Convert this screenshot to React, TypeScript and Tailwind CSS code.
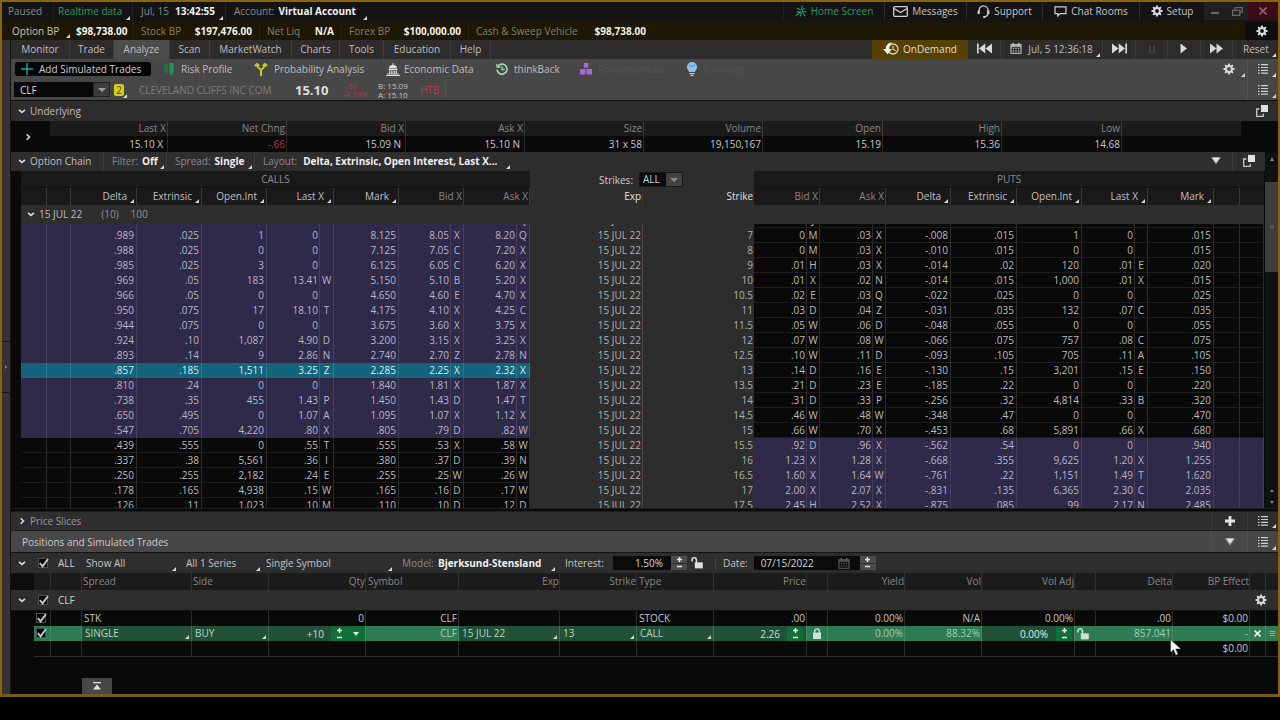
import React, { useLayoutEffect, useRef } from "react";

const CALLS_AND_PUTS: string[][] = [
  [".990", ".025", "0", "0", "", "9.125", "9.05", "X", "9.20", "Q", "6", "0", "J", ".03", "X", "-.006", ".015", "0", "0", "", ".015"],
  [".989", ".025", "1", "0", "", "8.125", "8.05", "X", "8.20", "Q", "7", "0", "M", ".03", "X", "-.008", ".015", "1", "0", "", ".015"],
  [".988", ".025", "0", "0", "", "7.125", "7.05", "C", "7.20", "X", "8", "0", "M", ".03", "X", "-.010", ".015", "0", "0", "", ".015"],
  [".985", ".025", "3", "0", "", "6.125", "6.05", "C", "6.20", "X", "9", ".01", "H", ".03", "X", "-.014", ".02", "120", ".01", "E", ".020"],
  [".969", ".05", "183", "13.41", "W", "5.150", "5.10", "B", "5.20", "X", "10", ".01", "X", ".02", "N", "-.014", ".015", "1,000", ".01", "X", ".015"],
  [".966", ".05", "0", "0", "", "4.650", "4.60", "E", "4.70", "X", "10.5", ".02", "E", ".03", "Q", "-.022", ".025", "0", "0", "", ".025"],
  [".950", ".075", "17", "18.10", "T", "4.175", "4.10", "X", "4.25", "C", "11", ".03", "D", ".04", "Z", "-.031", ".035", "132", ".07", "C", ".035"],
  [".944", ".075", "0", "0", "", "3.675", "3.60", "X", "3.75", "X", "11.5", ".05", "W", ".06", "D", "-.048", ".055", "0", "0", "", ".055"],
  [".924", ".10", "1,087", "4.90", "D", "3.200", "3.15", "X", "3.25", "X", "12", ".07", "W", ".08", "W", "-.066", ".075", "757", ".08", "C", ".075"],
  [".893", ".14", "9", "2.86", "N", "2.740", "2.70", "Z", "2.78", "N", "12.5", ".10", "W", ".11", "D", "-.093", ".105", "705", ".11", "A", ".105"],
  [".857", ".185", "1,511", "3.25", "Z", "2.285", "2.25", "X", "2.32", "X", "13", ".14", "D", ".16", "E", "-.130", ".15", "3,201", ".15", "E", ".150"],
  [".810", ".24", "0", "0", "", "1.840", "1.81", "X", "1.87", "X", "13.5", ".21", "D", ".23", "E", "-.185", ".22", "0", "0", "", ".220"],
  [".738", ".35", "455", "1.43", "P", "1.450", "1.43", "D", "1.47", "T", "14", ".31", "D", ".33", "P", "-.256", ".32", "4,814", ".33", "B", ".320"],
  [".650", ".495", "0", "1.07", "A", "1.095", "1.07", "X", "1.12", "X", "14.5", ".46", "W", ".48", "W", "-.348", ".47", "0", "0", "", ".470"],
  [".547", ".705", "4,220", ".80", "X", ".805", ".79", "D", ".82", "W", "15", ".66", "W", ".70", "X", "-.453", ".68", "5,891", ".66", "X", ".680"],
  [".439", ".555", "0", ".55", "T", ".555", ".53", "X", ".58", "W", "15.5", ".92", "D", ".96", "X", "-.562", ".54", "0", "0", "", ".940"],
  [".337", ".38", "5,561", ".36", "I", ".380", ".37", "D", ".39", "N", "16", "1.23", "X", "1.28", "X", "-.668", ".355", "9,625", "1.20", "X", "1.255"],
  [".250", ".255", "2,182", ".24", "E", ".255", ".25", "W", ".26", "W", "16.5", "1.60", "X", "1.64", "W", "-.761", ".22", "1,151", "1.49", "T", "1.620"],
  [".178", ".165", "4,938", ".15", "W", ".165", ".16", "D", ".17", "W", "17", "2.00", "X", "2.07", "X", "-.831", ".135", "6,365", "2.30", "C", "2.035"],
  [".126", ".11", "1,023", ".10", "M", ".110", ".10", "D", ".12", "D", "17.5", "2.45", "H", "2.52", "X", "-.875", ".085", "99", "2.17", "N", "2.485"],
];

const UNDERLYING = [
  ["Last X", "15.10 X"],
  ["Net Chng", "-.66"],
  ["Bid X", "15.09 N"],
  ["Ask X", "15.10 N"],
  ["Size", "31 x 58"],
  ["Volume", "19,150,167"],
  ["Open", "15.19"],
  ["High", "15.36"],
  ["Low", "14.68"],
];

/* ---------- small drawings ---------- */

function Corner() {
  return (
    <svg className="pointer-events-none absolute right-0.5 bottom-0.5 size-1" viewBox="0 0 4 4" aria-hidden="true">
      <path d="M4 0v4H0z" fill="#d6d6d6" />
    </svg>
  );
}

function Gear({ className = "size-3" }: { className?: string }) {
  return (
    <svg className={className} viewBox="0 0 24 24" fill="none" stroke="currentColor" aria-hidden="true">
      <circle cx="12" cy="12" r="5.8" strokeWidth="4" />
      <path
        strokeWidth="3.8"
        d="M12 1v4M12 19v4M1 12h4M19 12h4M4.2 4.2l3 3M16.8 16.8l3 3M4.2 19.8l3-3M16.8 7.2l3-3"
      />
    </svg>
  );
}

function ListIcon() {
  return (
    <svg className="h-2.5 w-3" viewBox="0 0 12 10" fill="#cfcfcf" aria-hidden="true">
      <path d="M1 0h1.6v1.3H1zM4 0h7v1.3H4zM1 2.9h1.600v1.2H1zM4 2.9h7v1.2H4zM1 5.7h1.6v1.2H1zM4 5.7h7v1.2H4zM1 8.500h1.6v1.2H1zM4 8.5h7v1.2H4z" />
    </svg>
  );
}

function Chevron({ right = false }: { right?: boolean }) {
  return (
    <svg className="size-2" viewBox="0 0 8 8" fill="none" stroke="#d8d8d8" strokeWidth="1.6" aria-hidden="true">
      <path d={right ? "M2.7 1.2l2.8 2.8-2.8 2.8" : "M1 2.8L4 5.4l3-2.6"} />
    </svg>
  );
}

function Popout() {
  return (
    <svg className="size-3" viewBox="0 0 12 12" aria-hidden="true">
      <path d="M3.5 4H.7v7.3h6.6V8.8" fill="none" stroke="#c8c8c8" strokeWidth="1.3" />
      <rect x="5" y="0" width="7" height="7" fill="#e2e2e2" />
    </svg>
  );
}

function DownTriangle() {
  return (
    <svg className="h-2 w-2.5" viewBox="0 0 10 8" aria-hidden="true">
      <path d="M0 .5h10L5 7.5z" fill="#9a9a9a" />
      <path d="M1.2 .5h7.600L5 5.4z" fill="#e4e4e4" />
    </svg>
  );
}

function OpenLock({ fill = "#dedede" }: { fill?: string }) {
  return (
    <svg className="h-3 w-3" viewBox="0 0 12 12" aria-hidden="true">
      <path d="M1 4.5V3a2.2 2.2 0 0 1 4.4 0v3" stroke={fill} strokeWidth="1.5" fill="none" />
      <rect x="3.8" y="5.4" width="8" height="6" fill={fill} />
    </svg>
  );
}

function CalendarIcon({ className = "text-[#c4c4c4]" }: { className?: string }) {
  return (
    <svg className={`h-[11px] w-3 ${className}`} viewBox="0 0 12 11" aria-hidden="true">
      <rect x="1" y="1.7" width="10" height="8.6" fill="none" stroke="currentColor" strokeWidth="1.1" />
      <path d="M1 3h10M3.3 0v2.5M8.7 0v2.5" stroke="currentColor" strokeWidth="1.5" />
      <path d="M2.8 5.4h1.4M5.3 5.4h1.4M7.8 5.4h1.4M2.8 7.9h1.4M5.3 7.9h1.4M7.8 7.9h1.4" stroke="currentColor" strokeWidth="1.3" />
    </svg>
  );
}

function Stepper({ green = false, name }: { green?: boolean; name: string }) {
  return (
    <span className={`flex h-[14px] w-4 flex-col ${green ? "bg-[#0f7038]" : "gap-px"}`}>
      <button aria-label={`Increase ${name}`} className={`flex flex-1 items-center justify-center ${green ? "" : "bg-[#4c4c4c]"}`}>
        <svg className="size-[5px]" viewBox="0 0 5 5" stroke="#e8e8e8" strokeWidth="1.5" aria-hidden="true">
          <path d="M0 2.5h5M2.5 0v5" />
        </svg>
      </button>
      <button aria-label={`Decrease ${name}`} className={`flex flex-1 items-center justify-center ${green ? "" : "bg-[#4c4c4c]"}`}>
        <svg className="size-[5px]" viewBox="0 0 5 5" stroke="#e8e8e8" strokeWidth="1.5" aria-hidden="true">
          <path d="M0 2.5h5" />
        </svg>
      </button>
    </span>
  );
}

function Check({ label, text }: { label: string; text?: string }) {
  return (
    <label className="flex items-center gap-[9px] text-[#cfcfcf]">
      <span className="relative block size-[11px]">
        <input
          type="checkbox"
          defaultChecked
          aria-label={label}
          className="block size-[10px] appearance-none border border-[#4e4e4e] bg-[#050505]"
        />
        <svg className="pointer-events-none absolute inset-0 size-[11px]" viewBox="0 0 11 11" aria-hidden="true">
          <path d="M1.8 5.2l2.8 3.2L10 1" fill="none" stroke="#c6c6c6" strokeWidth="1.9" />
        </svg>
      </span>
      {text}
    </label>
  );
}

/* ---------- header bars ---------- */

function StatusBar() {
  return (
    <header className="flex h-5 items-stretch bg-[#141414] text-[#c6c6c6] *:pb-0.5">
      <span className="flex w-[52px] items-center border-r border-[#1f1f1f] pl-1.5 text-[#8a8a8a]">Paused</span>
      <button className="relative flex w-[79px] items-center border-r border-[#242424] pl-1 text-[#2c9a62]">
        Realtime data
        <Corner />
      </button>
      <button className="relative flex w-[93px] items-center gap-1.5 border-r border-[#242424] pl-2 text-[#8a8a8a]">
        Jul, 15 <b className="text-[#f2f2f2]">13:42:55</b>
        <Corner />
      </button>
      <button className="relative flex w-[143px] items-center gap-1 pl-2 text-[#8a8a8a]">
        Account: <b className="text-[#f2f2f2]">Virtual Account</b>
        <Corner />
      </button>
      <nav className="ml-auto flex">
        <button className="flex w-[101px] items-center justify-center gap-1 border-l border-[#202020] text-[#2c9a62]">
          <svg className="size-3" viewBox="0 0 12 12" fill="none" stroke="#2a8a59" strokeWidth="1.3" aria-hidden="true">
            <path d="M7.2.5L6.6 5M9.8 3.2L6.8 5.6M11.3 6.6L7 6.4M1.8 3.2L5.8 5M6 6.4L1 10.8M6.6 7L5.2 11.5M7.4 7l2.8 4.2M4.6 6.6L1.8 7" />
          </svg>
          Home Screen
        </button>
        <button className="flex w-[82px] items-center justify-center gap-1 border-l border-[#2c2c2c]">
          <svg className="h-[11px] w-[15px]" viewBox="0 0 15 11" fill="none" stroke="#cfcfcf" strokeWidth="1.3" aria-hidden="true">
            <rect x=".7" y=".7" width="13.6" height="9.6" rx=".8" />
            <path d="M1 2.5l6.5 4 6.5-4" />
          </svg>
          Messages
        </button>
        <button className="flex w-[76px] items-center justify-center gap-1 border-l border-[#2c2c2c]">
          <svg className="size-[13px]" viewBox="0 0 13 13" fill="none" stroke="#cfcfcf" strokeWidth="1.3" aria-hidden="true">
            <path d="M2 7.5V5.4a4.4 4.4 0 0 1 9 0v2.1c0 2.5-1.4 4-3.4 4.4" />
            <path d="M1.7 5.5v3.4M11.3 5.5v3.4M6.2 12h2" strokeWidth="2.2" />
          </svg>
          Support
        </button>
        <button className="flex w-[97px] items-center justify-center gap-1 border-l border-[#2c2c2c]">
          <svg className="h-[11px] w-[13px]" viewBox="0 0 13 11" fill="none" stroke="#cfcfcf" strokeWidth="1.2" aria-hidden="true">
            <path d="M1 .8h11v6.8H6.2L3.8 10V7.6H1z" />
          </svg>
          Chat Rooms
        </button>
        <button className="flex w-[65px] items-center justify-center gap-1 border-l border-[#2c2c2c]">
          <Gear className="size-3 text-[#dcdcdc]" />
          Setup
        </button>
        <button aria-label="Minimize" className="flex w-[22px] items-center justify-center bg-[#202020]">
          <svg className="size-2" viewBox="0 0 8 8" stroke="#7a7a7a" strokeWidth="1.6" aria-hidden="true">
            <path d="M0 6h8" />
          </svg>
        </button>
        <button aria-label="Restore" className="flex w-[22px] items-center justify-center bg-[#202020]">
          <svg className="h-[9px] w-[11px]" viewBox="0 0 11 9" fill="none" stroke="#686868" strokeWidth="1.3" aria-hidden="true">
            <path d="M3 3V.7h7.3v4.6H8M.7 3.4h7.1v4.9H.7z" />
          </svg>
        </button>
        <button aria-label="Close" className="flex w-[30px] items-center justify-center bg-[#3b0c17]">
          <svg className="size-2" viewBox="0 0 8 8" stroke="#8d6670" strokeWidth="1.6" aria-hidden="true">
            <path d="M.5.5l7 7M7.5.5l-7 7" />
          </svg>
        </button>
      </nav>
    </header>
  );
}

function BalanceBar() {
  return (
    <div className="flex h-[18px] items-stretch bg-[#1e1704] text-[#85806f]">
      <div className="flex w-[132px] items-center border-r border-[#2a2415] pl-2.5 text-[#c9c4b2]">
        <button className="relative flex h-full w-[60px] items-center">
          Option BP
          <Corner />
        </button>
        <b className="pl-1 text-[#f2f2ec]">$98,738.00</b>
      </div>
      <div className="flex w-[126px] items-center justify-between border-r border-[#2a2415] px-[7px]">
        Stock BP <b className="text-[#f2f2ec]">$197,476.00</b>
      </div>
      <div className="flex w-[82px] items-center justify-between border-r border-[#2a2415] px-[7px]">
        Net Liq <b className="text-[#f2f2ec]">N/A</b>
      </div>
      <div className="flex w-[127px] items-center justify-between border-r border-[#2a2415] px-[7px]">
        Forex BP <b className="text-[#f2f2ec]">$100,000.00</b>
      </div>
      <div className="flex w-[184px] items-center justify-between px-[7px]">
        Cash &amp; Sweep Vehicle <b className="text-[#f2f2ec]">$98,738.00</b>
      </div>
      <button aria-label="Balance settings" className="ml-auto flex w-[33px] items-center justify-center bg-[#0d0d0d] text-[#e0e0e0]">
        <Gear />
      </button>
    </div>
  );
}

const TAB = "flex items-center justify-center border-r border-[#3e3e3e] pb-0.5";
const PLAY = "flex items-center justify-center border-r border-[#3a3a3a] pb-0.5";

function MenuBar() {
  return (
    <nav className="flex h-[19px] items-stretch bg-[#2d2b2c] text-[#bebebe]">
      <button className={`${TAB} w-[59px]`}>Monitor</button>
      <button className={`${TAB} w-11`}>Trade</button>
      <button className={`${TAB} w-14 bg-[#4c4c4c]`}>Analyze</button>
      <button className={`${TAB} w-10`}>Scan</button>
      <button className={`${TAB} w-[82px]`}>MarketWatch</button>
      <button className={`${TAB} w-12`}>Charts</button>
      <button className={`${TAB} w-11`}>Tools</button>
      <button className={`${TAB} w-[67px]`}>Education</button>
      <button className={`${TAB} w-10`}>Help</button>
      <div className="ml-auto flex">
        <button className="flex w-24 items-center justify-center gap-1 bg-[#574005] pb-0.5 text-[#e0dccb]">
          <svg className="h-[13px] w-4" viewBox="0 0 16 13" aria-hidden="true">
            <circle cx="10" cy="7" r="5" fill="none" stroke="#d9d4bf" strokeWidth="1.3" />
            <path d="M10 4v3.2l2.6 1.6" fill="none" stroke="#d9d4bf" strokeWidth="1.2" />
            <path d="M9 .5C5 .5 2.8 3.6 2.8 7H0l4.6 5.2L9 7H6.2C6 4.6 7 2.7 9 .5z" fill="#f2f0e4" />
          </svg>
          OnDemand
        </button>
        <button aria-label="Skip back" className={`${PLAY} w-[33px]`}>
          <svg className="h-[11px] w-[15px]" viewBox="0 0 15 11" fill="#d8d8d8" aria-hidden="true">
            <path d="M0 .5h1.7v10H0zM8.3.5v10L2 5.5zM15 .5v10L8.5 5.5z" />
          </svg>
        </button>
        <button className={`${PLAY} relative w-[102px] gap-1.5`}>
          <CalendarIcon />
          Jul, 5 12:36:18
          <Corner />
        </button>
        <button aria-label="Skip forward" className={`${PLAY} w-[33px]`}>
          <svg className="h-[11px] w-[15px]" viewBox="0 0 15 11" fill="#d8d8d8" aria-hidden="true">
            <path d="M13.3.5H15v10h-1.7zM6.7.5v10L13 5.5zM0 .5v10l6.5-5z" />
          </svg>
        </button>
        <button aria-label="Pause" className={`${PLAY} w-8`}>
          <svg className="size-2.5" viewBox="0 0 10 10" stroke="#434141" strokeWidth="2" aria-hidden="true">
            <path d="M3 1v8M7 1v8" />
          </svg>
        </button>
        <button aria-label="Play" className={`${PLAY} w-[33px]`}>
          <svg className="h-[11px] w-2" viewBox="0 0 8 11" fill="#d8d8d8" aria-hidden="true">
            <path d="M.5.5L7 5.5l-6.5 5z" />
          </svg>
        </button>
        <button aria-label="Fast forward" className={`${PLAY} w-8`}>
          <svg className="h-[11px] w-[13px]" viewBox="0 0 13 11" fill="#d8d8d8" aria-hidden="true">
            <path d="M0 .5l6.5 5-6.5 5zM6.5.5l6.500 5-6.5 5z" />
          </svg>
        </button>
        <button className="relative flex w-[45px] items-center pb-0.5 pl-2.5">
          Reset
          <Corner />
        </button>
      </div>
    </nav>
  );
}

function AnalyzeTabs() {
  return (
    <div className="flex h-5 items-center bg-[#474747] pl-1 text-[#bebebe]">
      <button className="flex h-3.5 w-[136px] items-center gap-1.5 rounded-[3px] bg-[#050505] pl-1.5 text-[#cfcfcf]">
        <svg className="size-3" viewBox="0 0 12 12" stroke="#259cab" strokeWidth="1.5" aria-hidden="true">
          <path d="M0 6h12M6 0v12" />
        </svg>
        Add Simulated Trades
      </button>
      <button className="flex w-[95px] items-center gap-1.5 pl-3">
        <svg className="size-3" viewBox="0 0 12 12" aria-hidden="true">
          <path d="M.5 1.5L5 .8V11L2.5 9.5C1 8 .5 4 .5 1.5z" fill="#1f7348" />
          <path d="M6.5 0h3.2c1.6 2 1.6 8-.4 11.5H6.5z" fill="#24925a" />
        </svg>
        Risk Profile
      </button>
      <button className="flex w-[130px] items-center gap-1.5 pl-2">
        <svg className="h-[13px] w-3.5" viewBox="0 0 14 13" fill="none" stroke="#cdc52a" strokeWidth="2" aria-hidden="true">
          <path d="M7 13V8C7 5 3 5.500 3 2M7 8c0-3 4-2.500 4-6M.8 3L3 1l2.2 2M8.8 3L11 1l2.2 2" />
        </svg>
        Probability Analysis
      </button>
      <button className="flex w-[110px] items-center gap-1 pl-2.5">
        <svg className="h-[13px] w-3.5" viewBox="0 0 14 13" fill="#dedede" aria-hidden="true">
          <path d="M6.5 0h1v1.800c2.200.3 3.500 1.800 3.600 3.700H2.900C3 3.600 4.300 2.100 6.500 1.800zM2.500 6h9v1h-9zM3 7.400h1.300v2.800H3zM5.200 7.400h1.300v2.800H5.200zM7.500 7.400h1.300v2.800H7.500zM9.700 7.400H11v2.800H9.700zM1 10.500h12v1H1zM0 12h14v1H0z" />
        </svg>
        Economic Data
      </button>
      <button className="flex w-[86px] items-center gap-1.5 pl-2.5">
        <svg className="size-3" viewBox="0 0 12 12" fill="none" stroke="#9bd8b4" strokeWidth="1.7" aria-hidden="true">
          <path d="M1.700 3.500A5 5 0 1 1 1 6.600" />
          <path d="M.5 1l.8 3.200L4.400 4M6 3.300v3.200h2.700" strokeWidth="1.3" />
        </svg>
        thinkBack
      </button>
      <button className="flex w-[104px] items-center gap-1.5 pl-2 text-[#545454]">
        <svg className="size-3" viewBox="0 0 12 12" fill="#ab66dd" aria-hidden="true">
          <path d="M3.800 0h4.500v4.800H3.800zM0 6h5.500v5.500H0zM6.500 6H12v5.500H6.500z" />
        </svg>
        Fundamentals
      </button>
      <button className="flex items-center gap-1.5 pl-2.5 text-[#525252]">
        <svg className="h-3.5 w-3" viewBox="0 0 12 14" aria-hidden="true">
          <path d="M6 0a5 5 0 0 0-5 5c0 2.300 1.500 3.200 2.200 5h5.600C9.500 8.200 11 7.300 11 5a5 5 0 0 0-5-5z" fill="#8dc3ea" />
          <path d="M3 3.200l3 1.200 3.300-1.500" stroke="#4d85ad" fill="none" />
          <path d="M3.500 11h5v1h-5zM4.500 12.700h3V14h-3z" fill="#b7d5e8" />
        </svg>
        Earnings
      </button>
      <div className="ml-auto flex h-full">
        <button aria-label="Analyze settings" className="relative flex w-[35px] items-center justify-center pr-0.5 text-[#dcdcdc]">
          <Gear />
          <Corner />
        </button>
        <button aria-label="View menu" className="relative flex w-[31px] items-center justify-center border-l border-[#535353]">
          <ListIcon />
          <Corner />
        </button>
      </div>
    </div>
  );
}

function SymbolBar() {
  return (
    <div className="flex h-[22px] items-center border-b border-[#0e0e0e] bg-[#474747] pl-[3px]">
      <input aria-label="Symbol" defaultValue="CLF" className="h-[15px] w-[79px] bg-[#090909] pl-1.5 text-[#d8d8d8] outline-none" />
      <button aria-label="Symbol list" className="flex h-[15px] w-[17px] items-center justify-center border border-[#222] bg-[#3c3c3c]">
        <svg className="h-1 w-2" viewBox="0 0 8 4" aria-hidden="true">
          <path d="M0 0h8L4 4z" fill="#9c9c9c" />
        </svg>
      </button>
      <button aria-label="Link group 2" className="relative ml-1 flex h-full w-[15px] items-center">
        <span className="flex h-3 w-2.5 items-center justify-center rounded-[2px] bg-[#d8cc1c] text-[#4a4500]">2</span>
        <Corner />
      </button>
      <span className="w-[166px] pl-2.5 text-[#7c7c7c]">CLEVELAND CLIFFS INC COM</span>
      <b className="w-12 text-[13px] text-[#dedede]">15.10</b>
      <span className="w-[35px] text-[8px] leading-[8px] text-[#b03a54]">
        -.66
        <br />
        -4.19%
      </span>
      <span className="w-[42px] text-[8px] leading-[9px] text-[#c4c4c4]">
        B: 15.09
        <br />
        A: 15.10
      </span>
      <span className="border-r border-[#555] pr-1.5 text-[#b83a54]">HTB</span>
      <button aria-label="Symbol menu" className="relative ml-auto flex h-full w-[31px] items-center justify-center border-l border-[#535353]">
        <ListIcon />
        <Corner />
      </button>
    </div>
  );
}

/* ---------- underlying ---------- */

function Underlying() {
  return (
    <section>
      <div className="flex h-5 items-center bg-[#2d2d2d] pl-[7px] text-[#bebebe]">
        <button className="flex items-center gap-1">
          <Chevron />
          Underlying
        </button>
        <button aria-label="Detach underlying" className="ml-auto flex w-8 items-center justify-center">
          <Popout />
        </button>
      </div>
      <table className="w-full table-fixed border-separate border-spacing-0 bg-[#0a0a0a] text-right">
        <colgroup>
          <col className="w-[39px]" />
          <col className="w-[118px]" />
          <col className="w-[119px]" />
          <col className="w-[119px]" />
          <col className="w-[119px]" />
          <col className="w-[119px]" />
          <col className="w-[119px]" />
          <col className="w-[120px]" />
          <col className="w-[119px]" />
          <col className="w-[120px]" />
          <col className="w-[119px]" />
          <col className="w-[37px]" />
        </colgroup>
        <tbody>
          <tr>
            <td rowSpan={2} className="p-0 align-middle">
              <button aria-label="Expand underlying" className="ml-[13px] block">
                <Chevron right />
              </button>
            </td>
            {UNDERLYING.map(([name]) => (
              <th key={name} className="h-[15px] border-r border-[#3a3a3a] bg-[#1b1b1b] p-0 pr-px leading-[15px] font-normal text-[#868686]">
                {name}
              </th>
            ))}
            <td className="bg-[#1b1b1b]" />
            <td />
          </tr>
          <tr>
            {UNDERLYING.map(([name, value]) => (
              <td
                key={name}
                className={`h-4 border-r border-[#2a2a2a] p-0 leading-4 ${name.endsWith("X") ? "pr-1" : "pr-px"} ${
                  name === "Net Chng" ? "text-[#b02f49]" : "text-[#c9c9c9]"
                }`}
              >
                {value}
              </td>
            ))}
            <td />
            <td />
          </tr>
        </tbody>
      </table>
    </section>
  );
}

/* ---------- option chain ---------- */

function ChainCols() {
  return (
    <colgroup>
      <col className="w-[26px]" />
      <col className="w-[24px]" />
      <col className="w-[66px]" />
      <col className="w-[65px]" />
      <col className="w-[65px]" />
      <col className="w-[53px]" />
      <col className="w-[14px]" />
      <col className="w-[65px]" />
      <col className="w-[52px]" />
      <col className="w-[13px]" />
      <col className="w-[53px]" />
      <col className="w-[13px]" />
      <col className="w-[113px]" />
      <col className="w-[111px]" />
      <col className="w-[53px]" />
      <col className="w-[13px]" />
      <col className="w-[53px]" />
      <col className="w-[13px]" />
      <col className="w-[65px]" />
      <col className="w-[66px]" />
      <col className="w-[65px]" />
      <col className="w-[53px]" />
      <col className="w-[13px]" />
      <col className="w-[66px]" />
      <col className="w-[26px]" />
      <col className="w-[24px]" />
    </colgroup>
  );
}

const HEAD = "h-[17px] border-r border-[#3a3a3a] p-0 leading-[17px] font-normal";

function SortHead({ text, span = 1 }: { text: string; span?: number }) {
  return (
    <th colSpan={span} className={`${HEAD} bg-[#191919] text-[#c0c0c0]`}>
      <button className="relative block h-[17px] w-full pr-[9px] text-right leading-[17px]">
        {text}
        <Corner />
      </button>
    </th>
  );
}

function QuoteHead({ text }: { text: string }) {
  return (
    <th colSpan={2} className={`${HEAD} bg-[#191919] pr-px text-[#858585]`}>
      {text}
    </th>
  );
}

const SELECTED = "border-r border-b border-r-[#2a7890] border-b-[#13647c] bg-[#13647c] text-[#d5edf3]";
const IN_MONEY = "border-r border-b border-r-[#45405f] border-b-[#2f2a4a] bg-[#2f2a4a] text-[#b9b6c8]";
const OUT_OF_MONEY = "border-r border-b border-r-[#2c2c2c] border-b-[#1d1d1d] bg-[#090909] text-[#bcbcbc]";
const LETTERS = [4, 7, 9, 12, 14, 20];
const PRICES = [3, 6, 8, 11, 13, 19];

function cellShape(i: number) {
  if (LETTERS.includes(i)) return "h-[15px] p-0 text-center leading-[14px]";
  if (PRICES.includes(i)) return "h-[15px] p-0 pr-px leading-[14px]";
  return "h-[15px] p-0 pr-0.5 leading-[14px]";
}

function ChainRow({ row }: { row: string[] }) {
  const strike = Number(row[10]);
  const call = strike === 13 ? SELECTED : strike <= 15 ? IN_MONEY : OUT_OF_MONEY;
  const put = strike > 15 ? IN_MONEY : OUT_OF_MONEY;
  const mid = "h-[15px] bg-[#2d2d2d] p-0 pr-px leading-[15px] text-[#b0b0b0]";
  return (
    <tr>
      <td className={call} />
      <td className={call} />
      {row.slice(0, 10).map((v, i) => (
        <td key={i} className={`${cellShape(i)} ${call}`}>
          {v}
        </td>
      ))}
      <td className={`${mid} border-r border-[#4a4a4a]`}>15 JUL 22</td>
      <td className={mid}>{row[10]}</td>
      {row.slice(11).map((v, i) => (
        <td key={i} className={`${cellShape(i + 11 === 18 ? 19 : i + 11 === 19 ? 20 : i + 11 === 20 ? 21 : i + 11)} ${put}`}>
          {v}
        </td>
      ))}
      <td className={put} />
      <td className={put} />
    </tr>
  );
}

function OptionChain() {
  const body = useRef<HTMLDivElement>(null);
  useLayoutEffect(() => {
    if (body.current) body.current.scrollTop = 11;
  }, []);
  return (
    <section className="flex bg-[#0a0a0a]">
      <div className="min-w-0 flex-1">
        <div className="flex h-[19px] items-stretch bg-[#2f2e2f] pl-[7px] text-[#8a8a8a] *:pb-0.5">
          <button className="flex w-[86px] items-center gap-1 border-r border-[#3c3c3c] text-[#bebebe]">
            <Chevron />
            Option Chain
          </button>
          <button className="relative flex w-[63px] items-center gap-1 border-r border-[#3c3c3c] pl-2">
            Filter: <b className="text-[#f0f0f0]">Off</b>
            <Corner />
          </button>
          <button className="relative flex w-[88px] items-center gap-1 border-r border-[#3c3c3c] pl-2">
            Spread: <b className="text-[#f0f0f0]">Single</b>
            <Corner />
          </button>
          <button className="relative flex w-[257px] items-center gap-1.5 pl-2">
            Layout: <b className="text-[#f0f0f0]">Delta, Extrinsic, Open Interest, Last X...</b>
            <Corner />
          </button>
          <button aria-label="Collapse chain" className="ml-auto flex w-[33px] items-center justify-center border-r border-[#3c3c3c]">
            <DownTriangle />
          </button>
          <button aria-label="Detach chain" className="flex w-8 items-center justify-center">
            <Popout />
          </button>
        </div>
        <div className="pr-px pl-2.5">
          <table className="w-full table-fixed border-separate border-spacing-0 text-right">
            <ChainCols />
            <thead>
              <tr>
                <th colSpan={12} className="h-[17px] border-b border-[#111] bg-[#191919] p-0 text-center leading-4 font-normal text-[#8c8c8c]">
                  CALLS
                </th>
                <th colSpan={2} className="h-[17px] bg-[#2d2d2d] p-0 font-normal text-[#d0d0d0]">
                  <label className="flex h-[17px] items-center justify-center gap-1.5 pr-0.5">
                    Strikes:
                    <span className="relative block">
                      <select className="block h-[15px] w-11 appearance-none border border-[#171717] bg-[#0c0c0c] pl-[3px] leading-[13px] outline-none">
                        <option>ALL</option>
                      </select>
                      <span className="pointer-events-none absolute top-px right-px flex h-[13px] w-4 items-center justify-center bg-[#424242]">
                        <svg className="h-1 w-2" viewBox="0 0 8 4" aria-hidden="true">
                          <path d="M0 0h8L4 4z" fill="#8c8c8c" />
                        </svg>
                      </span>
                    </span>
                  </label>
                </th>
                <th colSpan={12} className="h-[17px] border-b border-[#111] bg-[#191919] p-0 text-center leading-4 font-normal text-[#8c8c8c]">
                  PUTS
                </th>
              </tr>
              <tr>
                <td className={`${HEAD} bg-[#191919]`} />
                <td className={`${HEAD} bg-[#191919]`} />
                <SortHead text="Delta" />
                <SortHead text="Extrinsic" />
                <SortHead text="Open.Int" />
                <SortHead text="Last X" span={2} />
                <SortHead text="Mark" />
                <QuoteHead text="Bid X" />
                <QuoteHead text="Ask X" />
                <th className={`${HEAD} bg-[#2d2d2d] pr-px text-[#e0e0e0]`}>Exp</th>
                <th className="h-[17px] bg-[#2d2d2d] p-0 pr-px leading-[17px] font-normal text-[#e0e0e0]">Strike</th>
                <QuoteHead text="Bid X" />
                <QuoteHead text="Ask X" />
                <SortHead text="Delta" />
                <SortHead text="Extrinsic" />
                <SortHead text="Open.Int" />
                <SortHead text="Last X" span={2} />
                <SortHead text="Mark" />
                <td className={`${HEAD} bg-[#191919]`} />
                <td className="h-[17px] bg-[#191919] p-0" />
              </tr>
            </thead>
          </table>
          <button className="flex h-[19px] w-full items-center bg-[#2e2e2e] pb-0.5 pl-1.5 text-[#929292]">
            <Chevron />
            <span className="pr-[19px] pl-1 text-[#bdbdbd]">15 JUL 22</span>
            <span className="pr-3">(10)</span>
            100
          </button>
          <div ref={body} className="h-[284px] overflow-hidden">
            <table className="w-full table-fixed border-separate border-spacing-0 text-right">
              <ChainCols />
              <tbody>
                {CALLS_AND_PUTS.map((row) => (
                  <ChainRow key={row[10]} row={row} />
                ))}
              </tbody>
            </table>
          </div>
        </div>
      </div>
      <div className="flex w-[13px] flex-col items-center bg-[#111] pt-[5px] pb-1">
        <svg className="size-1" viewBox="0 0 4 4" aria-hidden="true">
          <path d="M2 0l2 4H0z" fill="#7a7a7a" />
        </svg>
        <div className="mt-[21px] flex h-[90px] w-full items-center justify-center bg-[#3d3d3d]">
          <span className="size-1 bg-[#555]" />
        </div>
        <svg className="mt-auto h-[15px] w-1" viewBox="0 0 4 15" fill="#7a7a7a" aria-hidden="true">
          <path d="M2 0l2 3H0zM2 15l2-3H0z" />
        </svg>
      </div>
    </section>
  );
}

/* ---------- positions ---------- */

const LINE = "border-r border-[#2c2c2c]";

function EditCell({ text }: { text: string }) {
  return (
    <td className="h-[15px] border-r border-[#3a7355] bg-[#215137] p-0">
      <button className="relative block h-[15px] w-full pl-[3px] text-left leading-[15px] text-[#b6d6c3]">
        {text}
        <Corner />
      </button>
    </td>
  );
}

function Positions() {
  const c = `h-[15px] ${LINE} p-0 pr-px leading-[15px]`;
  const g = "h-[15px] border-r border-[#44896a] bg-[#2e7b54] p-0 pr-px leading-[15px] text-[#a5ccb5]";
  const h = "h-[17px] border-r border-[#303030] bg-[#1b1b1b] p-0 leading-[17px] font-normal text-[#868686]";
  return (
    <section className="bg-[#090909] text-[#c4c4c4]">
      <div className="flex h-[19px] items-center border-b border-[#1c1c1c] bg-[#2e2e2e] pl-[7px] text-[#9a9a9a]">
        <button className="flex items-center gap-1">
          <Chevron right />
          Price Slices
        </button>
        <div className="ml-auto flex h-full">
          <button aria-label="Add slice" className="flex w-9 items-center justify-center border-l border-[#3a3a3a]">
            <svg className="size-2.5" viewBox="0 0 10 10" stroke="#e4e4e4" strokeWidth="2.8" aria-hidden="true">
              <path d="M0 5h10M5 0v10" />
            </svg>
          </button>
          <button aria-label="Slices menu" className="relative flex w-[31px] items-center justify-center border-l border-[#3a3a3a]">
            <ListIcon />
            <Corner />
          </button>
        </div>
      </div>
      <div className="flex h-[22px] items-center border-b border-[#141414] bg-[#474747] pl-[11px] text-[#cacaca]">
        Positions and Simulated Trades
        <div className="ml-auto flex h-full">
          <button aria-label="Collapse positions" className="flex w-9 items-center justify-center border-l border-[#525252]">
            <DownTriangle />
          </button>
          <button aria-label="Positions menu" className="relative flex w-[31px] items-center justify-center border-l border-[#525252]">
            <ListIcon />
            <Corner />
          </button>
        </div>
      </div>

      <div className="flex h-5 items-center bg-[#2e2e2e] pl-[7px]">
        <button aria-label="Collapse all" className="w-5">
          <Chevron />
        </button>
        <div className="w-12">
          <Check label="ALL" text="ALL" />
        </div>
        <button className="relative flex h-full w-[92px] items-center">
          Show All
          <Corner />
        </button>
        <button className="relative flex h-full w-[84px] items-center pl-2">
          All 1 Series
          <Corner />
        </button>
        <button className="relative flex h-full w-[132px] items-center pl-1">
          Single Symbol
          <Corner />
        </button>
        <button className="relative flex h-full w-[163px] items-center gap-1 pl-2 text-[#8a8a8a]">
          Model: <b className="text-[#f0f0f0]">Bjerksund-Stensland</b>
          <Corner />
        </button>
        <label className="flex w-[114px] items-center justify-between pl-2">
          Interest:
          <input defaultValue="1.50%" className="h-3.5 w-[58px] bg-[#0b0b0b] pr-2 text-right text-[#d6d6d6] outline-none" />
        </label>
        <Stepper name="interest" />
        <button aria-label="Unlock interest" className="ml-1 block">
          <OpenLock />
        </button>
        <label className="ml-3 flex items-center gap-1.5 border-l border-[#414141] pl-[7px]">
          Date:
          <input defaultValue="07/15/2022" className="h-3.5 w-[82px] bg-[#0b0b0b] pl-[7px] text-[#d6d6d6] outline-none" />
        </label>
        <button aria-label="Pick date" className="flex h-3.5 w-6 items-center bg-[#0b0b0b] pl-0.5">
          <CalendarIcon className="text-[#5c5c5c]" />
        </button>
        <Stepper name="date" />
      </div>

      <table className="w-full table-fixed border-separate border-spacing-0 text-right">
        <colgroup>
          <col className="w-[23px]" />
          <col className="w-[17px]" />
          <col className="w-[31px]" />
          <col className="w-[110px]" />
          <col className="w-[77px]" />
          <col className="w-[97px]" />
          <col className="w-[93px]" />
          <col className="w-[101px]" />
          <col className="w-[77px]" />
          <col className="w-[77px]" />
          <col className="w-[93px]" />
          <col className="w-[21px]" />
          <col className="w-[77px]" />
          <col className="w-[77px]" />
          <col className="w-[93px]" />
          <col className="w-[21px]" />
          <col className="w-[77px]" />
          <col className="w-[77px]" />
          <col className="w-[16px]" />
          <col className="w-[12px]" />
        </colgroup>
        <thead>
          <tr>
            <td className="h-[17px] bg-[#0e0e0e] p-0" />
            <td className={h} />
            <td className={h} />
            <th className={`${h} pl-px text-left`}>Spread</th>
            <th className={`${h} pl-px text-left`}>Side</th>
            <th className={h}>Qty</th>
            <th className={`${h} pl-0.5 text-left`}>Symbol</th>
            <th className={h}>Exp</th>
            <th className={h}>Strike</th>
            <th className={`${h} pl-0.5 text-left`}>Type</th>
            <th className={h}>Price</th>
            <td className={h} />
            <th className={h}>Yield</th>
            <th className={h}>Vol</th>
            <th className={h}>Vol Adj</th>
            <td className={h} />
            <th className={h}>Delta</th>
            <th className={h}>BP Effect</th>
            <td className={h} />
            <td className="h-[17px] bg-[#1b1b1b] p-0" />
          </tr>
        </thead>
        <tbody>
          <tr>
            <td colSpan={20} className="h-[21px] border-b border-[#141414] bg-[#2e2e2e] p-0">
              <div className="flex h-5 items-center pl-[7px]">
                <button aria-label="Collapse CLF" className="w-5">
                  <Chevron />
                </button>
                <Check label="CLF" text="CLF" />
                <button aria-label="CLF settings" className="ml-auto flex w-[34px] items-center justify-center text-[#dcdcdc]">
                  <Gear />
                </button>
              </div>
            </td>
          </tr>
          <tr>
            <td />
            <td className={c}>
              <div className="flex justify-center">
                <Check label="STK" />
              </div>
            </td>
            <td className={c} />
            <td className={`${c} pl-0.5 text-left`}>STK</td>
            <td className={c} />
            <td className={c}>0</td>
            <td className={c}>CLF</td>
            <td className={c} />
            <td className={c} />
            <td className={`${c} pl-0.5 text-left`}>STOCK</td>
            <td className={c}>.00</td>
            <td className={c} />
            <td className={c}>0.00%</td>
            <td className={c}>N/A</td>
            <td className={c}>0.00%</td>
            <td className={c} />
            <td className={c}>.00</td>
            <td className={c}>$0.00</td>
            <td className={c} />
            <td className="p-0" />
          </tr>
          <tr>
            <td />
            <td className={g}>
              <div className="flex justify-center">
                <Check label="SINGLE" />
              </div>
            </td>
            <td className={g} />
            <EditCell text="SINGLE" />
            <EditCell text="BUY" />
            <td className="h-[15px] border-r border-[#44896a] bg-[#215137] p-0">
              <div className="flex h-[15px] items-center justify-end text-[#c5e0d0]">
                <span className="pr-[7px]">+10</span>
                <Stepper green name="quantity" />
                <button aria-label="Quantity presets" className="flex h-[15px] w-[18px] items-center justify-center bg-[#0f7038]">
                  <svg className="h-1 w-1.5" viewBox="0 0 6 4" aria-hidden="true">
                    <path d="M0 0h6L3 4z" fill="#dff5e8" />
                  </svg>
                </button>
              </div>
            </td>
            <td className={g}>CLF</td>
            <EditCell text="15 JUL 22" />
            <EditCell text="13" />
            <EditCell text="CALL" />
            <td className="h-[15px] border-r border-[#44896a] bg-[#215137] p-0">
              <div className="flex h-[15px] items-center justify-end pr-[3px] text-[#c5e0d0]">
                <span className="pr-[7px]">2.26</span>
                <Stepper green name="price" />
              </div>
            </td>
            <td className="h-[15px] border-r border-[#44896a] bg-[#2e7b54] p-0">
              <button aria-label="Locked price" className="flex h-[15px] w-full items-center justify-center">
                <svg className="h-[11px] w-2" viewBox="0 0 8 11" aria-hidden="true">
                  <path d="M1.7 5V3.2a2.3 2.3 0 0 1 4.6 0V5" fill="none" stroke="#c8e4d3" strokeWidth="1.4" />
                  <path d="M0 4.600h8V11H0z" fill="#c8e4d3" />
                </svg>
              </button>
            </td>
            <td className={g}>0.00%</td>
            <td className={g}>88.32%</td>
            <td className="h-[15px] border-r border-[#44896a] bg-[#215137] p-0">
              <div className="flex h-[15px] items-center justify-end pr-0.5 text-[#e2efe7]">
                <span className="pr-2">0.00%</span>
                <Stepper green name="volatility adjustment" />
              </div>
            </td>
            <td className="h-[15px] bg-[#2e7b54] p-0">
              <button aria-label="Unlock volatility" className="ml-0.5 block">
                <OpenLock fill="#c8e4d3" />
              </button>
            </td>
            <td className={g}>857.041</td>
            <td className={g}>-</td>
            <td className={g}>
              <button aria-label="Remove trade" className="flex h-[15px] w-full items-center justify-center">
                <svg className="size-[7px]" viewBox="0 0 7 7" stroke="#e3f3ea" strokeWidth="1.6" aria-hidden="true">
                  <path d="M.5.5l6 6M6.5.5l-6 6" />
                </svg>
              </button>
            </td>
            <td className="bg-[#2e7b54] p-0">
              <button aria-label="Trade actions" className="flex h-[15px] w-full items-center justify-center">
                <svg className="size-[5px]" viewBox="0 0 5 5" fill="#7fb497" aria-hidden="true">
                  <path d="M0 0h5v1H0zM0 2h5v1H0zM0 4h5v1H0z" />
                </svg>
              </button>
            </td>
          </tr>
          <tr>
            <td />
            {Array.from({ length: 18 }, (_, i) => (
              <td key={i} className="h-4 border-r border-b border-[#2c2c2c] p-0 pr-px leading-[15px]">
                {i === 16 ? "$0.00" : ""}
              </td>
            ))}
            <td className="border-b border-[#2c2c2c] p-0" />
          </tr>
        </tbody>
      </table>
      <div className="flex h-[37px] items-end pl-[71px]">
        <button aria-label="Expand panel" className="flex h-4 w-[30px] items-center justify-center bg-[#474747]">
          <svg className="h-2 w-2.5" viewBox="0 0 10 8" fill="#e2e2e2" aria-hidden="true">
            <path d="M1 0h8v1.3H1zM5 2.5L9 7.5H1z" />
          </svg>
        </button>
      </div>
    </section>
  );
}

export default function App() {
  return (
    <div className="min-h-screen bg-black font-['Open_Sans','Noto_Sans',sans-serif] text-[10px] leading-[14px] whitespace-nowrap">
      <main className="relative overflow-hidden border-2 border-b-[3px] border-[#8a6408] border-b-[#755b1c] bg-[#090909]">
        <StatusBar />
        <BalanceBar />
        <div className="flex">
          <aside className="flex w-[9px] items-center justify-center border-r border-[#141414] bg-[#353334]">
            <button aria-label="Open sidebar" className="flex h-[52px] w-full items-center justify-center border-y border-[#161616]">
              <svg className="h-1 w-0.5" viewBox="0 0 2 4" aria-hidden="true">
                <path d="M0 0l2 2-2 2z" fill="#8a8a8a" />
              </svg>
            </button>
          </aside>
          <div className="min-w-0 flex-1">
            <MenuBar />
            <AnalyzeTabs />
            <SymbolBar />
            <Underlying />
            <OptionChain />
            <div className="h-1 border-y border-[#1e1e1e] bg-[#0a0a0a]" />
            <Positions />
          </div>
        </div>
        <svg className="pointer-events-none absolute right-24 bottom-[38px] h-[17px] w-3" viewBox="0 0 12 17" aria-hidden="true">
          <path d="M.5.5v13l3-2.8 2.3 5.5 2.3-1-2.3-5.2H11z" fill="#f5f5f5" stroke="#222" strokeWidth=".5" />
        </svg>
      </main>
    </div>
  );
}
